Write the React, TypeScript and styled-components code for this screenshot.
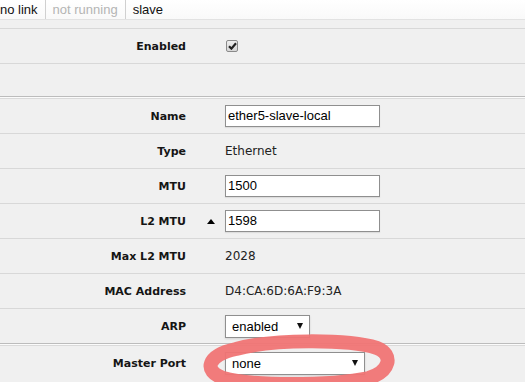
import * as React from 'react'
import styled, {createGlobalStyle} from 'styled-components'

const GlobalStyle = createGlobalStyle`
  html, body {
    margin: 0;
    padding: 0;
    background: #f0f0f0;
  }
  body {
    font-family: "DejaVu Sans", Verdana, sans-serif;
  }
`

const Page = styled.div`
  position: relative;
  width: 525px;
  height: 382px;
  overflow: hidden;
  background: #f0f0f0;
`

const StatusBar = styled.div`
  display: flex;
  height: 19px;
  background: linear-gradient(#ffffff, #f9f9f9);
  border-bottom: 1px solid #e2e2e2;
  font-family: "Liberation Sans", Arial, sans-serif;
  font-size: 13px;
  line-height: 19px;
`

const StatusCell = styled.div<{$muted?: boolean; $first?: boolean}>`
  padding: 0 7px 0 ${p => (p.$first ? '0' : '7px')};
  border-right: ${p => (p.$first || p.$muted ? '1px solid #d0d0d0' : 'none')};
  color: ${p => (p.$muted ? '#b4b4b4' : '#111')};
  white-space: nowrap;
`

const Form = styled.div`
  margin-top: 8px;
`

const Row = styled.div<{$section?: boolean; $h?: number}>`
  box-sizing: border-box;
  display: grid;
  grid-template-columns: 186px 39px 1fr;
  align-items: center;
  height: ${p => p.$h ?? 35}px;
  border-top: 1px solid ${p => (p.$section ? '#bcbcbc' : '#d8d8d8')};
  box-shadow: ${p => (p.$section ? 'inset 0 1px #fbfbfb, inset 0 2px #dadada' : 'none')};
  padding-top: ${p => (p.$section ? '2px' : '0')};
`

const Label = styled.div`
  text-align: right;
  font-size: 11px;
  font-weight: bold;
  color: #151515;
  white-space: nowrap;
`

const Marker = styled.div`
  justify-self: end;
  margin-right: 10px;
  width: 0;
  height: 0;
  border-left: 4px solid transparent;
  border-right: 4px solid transparent;
  border-bottom: 5px solid #000;
`

const Value = styled.div`
  font-size: 12px;
  color: #222;
  white-space: nowrap;
`

const TextBox = styled.div<{$w: number}>`
  box-sizing: border-box;
  width: ${p => p.$w}px;
  height: 22px;
  padding: 0 2px;
  background: #fff;
  border: 1px solid #8f8f8f;
  box-shadow: 0 1px 1px rgba(0, 0, 0, 0.08);
  font-family: "Liberation Sans", Arial, sans-serif;
  font-size: 13px;
  line-height: 20px;
  color: #000;
`

const SelectBox = styled.div<{$w: number}>`
  box-sizing: border-box;
  display: flex;
  align-items: center;
  justify-content: space-between;
  width: ${p => p.$w}px;
  height: 23px;
  padding: 0 6px 0 6px;
  background: #fff;
  border: 1px solid #8f8f8f;
  box-shadow: 0 1px 2px rgba(0, 0, 0, 0.12);
  font-family: "Liberation Sans", Arial, sans-serif;
  font-size: 13px;
  color: #000;
`

const Arrow = styled.span`
  width: 0;
  height: 0;
  border-left: 3.5px solid transparent;
  border-right: 3.5px solid transparent;
  border-top: 6px solid #111;
`

const CheckBox = styled.div`
  box-sizing: border-box;
  width: 12px;
  height: 12px;
  margin-left: 1px;
  border: 1px solid #8a8a8a;
  border-radius: 2px;
  background: linear-gradient(#eeeeee, #d6d6d6);
  display: flex;
  align-items: center;
  justify-content: center;
`

const Annotation = styled.svg`
  position: absolute;
  left: 0;
  top: 0;
  pointer-events: none;
`

export default function App() {
  return (
    <Page>
      <GlobalStyle />
      <StatusBar>
        <StatusCell $first>no link</StatusCell>
        <StatusCell $muted>not running</StatusCell>
        <StatusCell>slave</StatusCell>
      </StatusBar>
      <Form>
        <Row>
          <Label>Enabled</Label>
          <span />
          <CheckBox>
            <svg width="9" height="8" viewBox="0 0 9 8">
              <path d="M1 4.2 L3.4 6.6 L8 1.2" fill="none" stroke="#222" strokeWidth="2.2" />
            </svg>
          </CheckBox>
        </Row>
        <Row $h={33} />
        <Row $section $h={37}>
          <Label>Name</Label>
          <span />
          <TextBox $w={155}>ether5-slave-local</TextBox>
        </Row>
        <Row>
          <Label>Type</Label>
          <span />
          <Value>Ethernet</Value>
        </Row>
        <Row>
          <Label>MTU</Label>
          <span />
          <TextBox $w={155}>1500</TextBox>
        </Row>
        <Row>
          <Label>L2 MTU</Label>
          <Marker />
          <TextBox $w={155}>1598</TextBox>
        </Row>
        <Row>
          <Label>Max L2 MTU</Label>
          <span />
          <Value>2028</Value>
        </Row>
        <Row>
          <Label>MAC Address</Label>
          <span />
          <Value>D4:CA:6D:6A:F9:3A</Value>
        </Row>
        <Row>
          <Label>ARP</Label>
          <span />
          <SelectBox $w={85}>
            enabled
            <Arrow />
          </SelectBox>
        </Row>
        <Row $section $h={37}>
          <Label>Master Port</Label>
          <span />
          <SelectBox $w={140}>
            none
            <Arrow />
          </SelectBox>
        </Row>
      </Form>
      <Annotation width="525" height="382" viewBox="0 0 525 382">
        <path
          d="M236 349 C272 339 348 339 377 348 C394 355 390 371 369 378 C330 386 250 386 223 378 C203 371 207 355 236 349 Z"
          fill="none"
          stroke="#f07474"
          strokeWidth="14"
          strokeLinejoin="round"
          opacity="0.95"
        />
      </Annotation>
    </Page>
  )
}
